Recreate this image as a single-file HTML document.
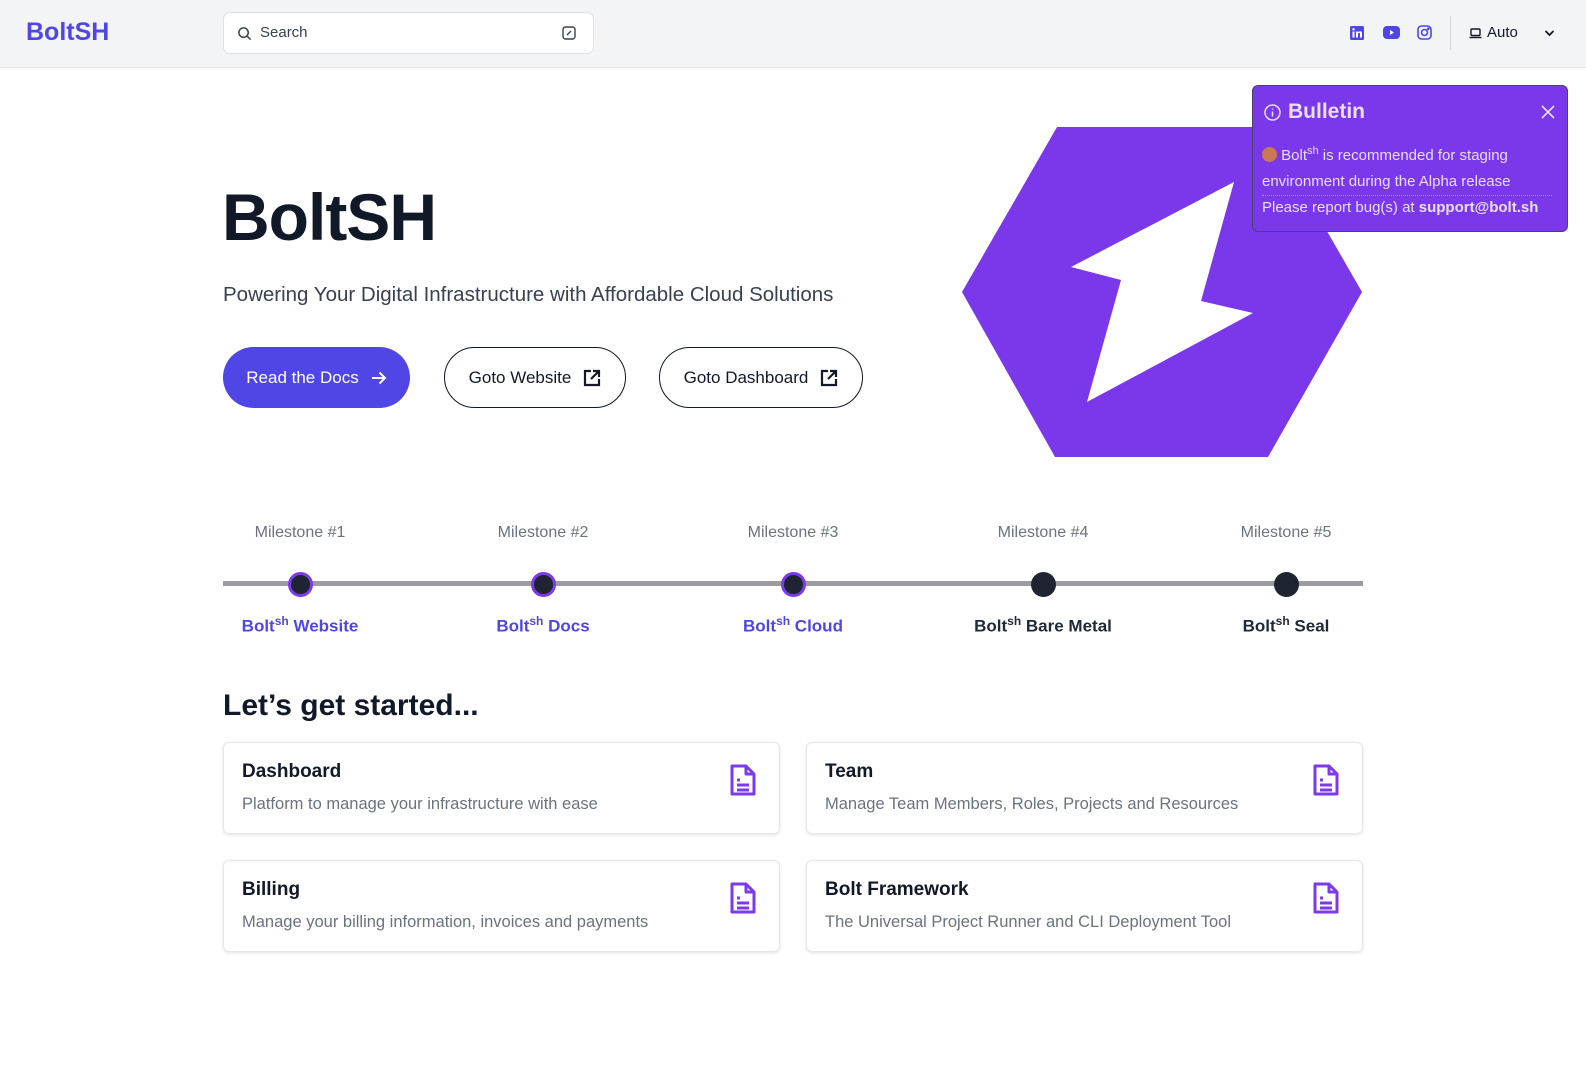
<!DOCTYPE html>
<html><head><meta charset="utf-8"><style>
*{box-sizing:border-box;margin:0;padding:0}
body{width:1586px;height:1080px;position:relative;background:#fff;font-family:"Liberation Sans",sans-serif;color:#111827;overflow:hidden}
.a{position:absolute}
.nav{left:0;top:0;width:1586px;height:68px;background:#f3f4f6;border-bottom:1px solid #e5e7eb}
.btn{position:absolute;top:347px;height:61px;border-radius:31px;display:flex;align-items:center;justify-content:center;gap:12px;font-size:17px}
.ol{border:1.5px solid #111827;color:#111827}
.ms{position:absolute;top:524px;width:200px;margin-left:-100px;text-align:center;color:#6b7280;font-size:16px}
.lb{position:absolute;top:614px;width:240px;margin-left:-120px;text-align:center;font-size:17px;font-weight:bold}
.lb sup{font-size:12px}
.dot{position:absolute;top:572px;width:25px;height:25px;margin-left:-12.5px;border-radius:50%;background:#1f2433}
.card{position:absolute;width:557px;height:92px;border:1.5px solid #e5e7eb;border-radius:6px;box-shadow:0 1px 3px rgba(0,0,0,.12)}
.card h3{position:absolute;left:18px;top:18px;font-size:19px;font-weight:bold;color:#111827}
.card p{position:absolute;left:18px;top:52px;font-size:16.5px;color:#6b7280}
.card svg{position:absolute;right:22px;top:20px}
</style></head><body>
<div class="a nav"></div>
<div class="a" style="left:26px;top:18px;font-size:25px;color:#4f46e5;font-weight:bold">BoltSH</div>
<div class="a" style="left:223px;top:12px;width:371px;height:42px;background:#fff;border:1.5px solid #e0e0e5;border-radius:7px">
<svg class="a" style="left:13px;top:13px" width="15" height="15" viewBox="0 0 16 16" fill="none" stroke="#374151" stroke-width="1.6"><circle cx="7" cy="7" r="5"/><path d="M11 11l3.5 3.5"/></svg>
<div class="a" style="left:36px;top:11px;font-size:15px;color:#374151">Search</div>
<svg class="a" style="left:338px;top:13px" width="14" height="14" viewBox="0 0 14 14" fill="none" stroke="#374151" stroke-width="1.4"><rect x="1" y="1" width="12" height="12" rx="2.5"/><path d="M5 9l4-4"/></svg>
</div>
<svg class="a" style="left:1350px;top:26px" width="14" height="14" viewBox="0 0 14 14"><rect width="14" height="14" rx="1.5" fill="#4f46e5"/><rect x="2.5" y="5.5" width="2" height="6" fill="#fff"/><circle cx="3.5" cy="3.3" r="1.2" fill="#fff"/><path d="M6 5.5h2v1c.5-.8 1.3-1.2 2.2-1.2 1.3 0 1.8.9 1.8 2.3V11.5h-2V8c0-.8-.3-1.2-.9-1.2S8 7.3 8 8v3.5H6z" fill="#fff"/></svg>
<svg class="a" style="left:1383px;top:26px" width="17" height="13" viewBox="0 0 17 13"><rect width="17" height="13" rx="4" fill="#4f46e5"/><path d="M7 4l4 2.5L7 9z" fill="#fff"/></svg>
<svg class="a" style="left:1417px;top:25px" width="15" height="15" viewBox="0 0 15 15" fill="none" stroke="#4f46e5" stroke-width="1.6"><rect x="1" y="1" width="13" height="13" rx="3.5"/><circle cx="7.5" cy="7.5" r="3"/><circle cx="11.2" cy="3.8" r=".6" fill="#4f46e5"/></svg>
<div class="a" style="left:1450px;top:16px;width:1px;height:34px;background:#d1d5db"></div>
<svg class="a" style="left:1469px;top:28px" width="13" height="11" viewBox="0 0 13 11" fill="none" stroke="#111827" stroke-width="1.4"><rect x="2" y="1" width="9" height="6.5" rx="1"/><path d="M.5 9.5h12"/></svg>
<div class="a" style="left:1487px;top:24px;font-size:15px;color:#111827">Auto</div>
<svg class="a" style="left:1544px;top:29px" width="11" height="8" viewBox="0 0 11 8" fill="none" stroke="#111827" stroke-width="1.8"><path d="M1.5 2l4 4 4-4"/></svg>

<div class="a" style="left:222px;top:179px;font-size:66px;font-weight:bold;letter-spacing:-1px;color:#111827">BoltSH</div>
<div class="a" style="left:223px;top:283px;font-size:20.5px;color:#374151">Powering Your Digital Infrastructure with Affordable Cloud Solutions</div>
<div class="btn" style="left:223px;width:187px;background:#4f46e5;color:#fff">Read the Docs <svg width="16" height="14" viewBox="0 0 16 14" fill="none" stroke="#fff" stroke-width="2"><path d="M1 7h13M8.5 1.5L14 7l-5.5 5.5"/></svg></div>
<div class="btn ol" style="left:444px;width:182px">Goto Website <svg width="18" height="18" viewBox="0 0 18 18" fill="none" stroke="#111827" stroke-width="2.2"><path d="M8 2H2v14h14v-6M10 2h6v6M16 2L8 10"/></svg></div>
<div class="btn ol" style="left:659px;width:204px">Goto Dashboard <svg width="18" height="18" viewBox="0 0 18 18" fill="none" stroke="#111827" stroke-width="2.2"><path d="M8 2H2v14h14v-6M10 2h6v6M16 2L8 10"/></svg></div>

<svg class="a" style="left:0;top:0" width="1586" height="480"><polygon points="1057,127 1267,127 1362,292 1268,457 1055,457 962,292" fill="#7a38ea"/><polygon points="1234,182 1071,267 1121,280 1087,402 1253,313 1201,301" fill="#fff"/></svg>

<div class="a" style="left:1252px;top:85px;width:316px;height:147px;background:#7a38ea;border:1.5px solid #4b3f6b;border-radius:6px;color:#e9defc">
<svg class="a" style="left:11px;top:18px" width="17" height="17" viewBox="0 0 17 17" fill="none" stroke="#e9defc" stroke-width="1.5"><circle cx="8.5" cy="8.5" r="7.5"/><path d="M8.5 7.5v5M8.5 4.5v1"/></svg>
<div class="a" style="left:35px;top:14px;font-size:21px;font-weight:bold">Bulletin</div>
<svg class="a" style="left:288px;top:19px" width="14" height="14" viewBox="0 0 14 14" stroke="#e9defc" stroke-width="1.6"><path d="M1 1l12 12M13 1L1 13"/></svg>
<div class="a" style="left:9px;top:57px;font-size:15px;line-height:26px;width:300px"><span style="display:inline-block;width:15px;height:15px;border-radius:50%;background:#c97a55;vertical-align:-2px"></span> Bolt<sup style="font-size:11px;line-height:0">sh</sup> is recommended for staging environment during the Alpha release</div>
<div class="a" style="left:9px;top:109px;width:290px;border-top:1px dotted #a89cc8"></div>
<div class="a" style="left:9px;top:113px;font-size:15px">Please report bug(s) at <b>support@bolt.sh</b></div>
</div>

<div class="ms" style="left:300px">Milestone #1</div>
<div class="ms" style="left:543px">Milestone #2</div>
<div class="ms" style="left:793px">Milestone #3</div>
<div class="ms" style="left:1043px">Milestone #4</div>
<div class="ms" style="left:1286px">Milestone #5</div>
<div class="a" style="left:223px;top:581px;width:1140px;height:5px;background:#9b9ba0"></div>
<div class="dot" style="left:300px;border:3px solid #7c3aed"></div>
<div class="dot" style="left:543px;border:3px solid #7c3aed"></div>
<div class="dot" style="left:793px;border:3px solid #7c3aed"></div>
<div class="dot" style="left:1043px"></div>
<div class="dot" style="left:1286px"></div>
<div class="lb" style="left:300px;color:#4f46e5">Bolt<sup>sh</sup> Website</div>
<div class="lb" style="left:543px;color:#4f46e5">Bolt<sup>sh</sup> Docs</div>
<div class="lb" style="left:793px;color:#4f46e5">Bolt<sup>sh</sup> Cloud</div>
<div class="lb" style="left:1043px;color:#1f2937">Bolt<sup>sh</sup> Bare Metal</div>
<div class="lb" style="left:1286px;color:#1f2937">Bolt<sup>sh</sup> Seal</div>

<div class="a" style="left:223px;top:689px;font-size:30px;font-weight:bold;color:#111827">Let’s get started...</div>

<div class="card" style="left:223px;top:742px"><h3>Dashboard</h3><p>Platform to manage your infrastructure with ease</p><svg width="28" height="34" viewBox="0 0 28 34" fill="none" stroke="#7c3aed" stroke-width="3" stroke-linejoin="round"><path d="M3 3h14l8 8v20H3z"/><path d="M17 3v8h8M8 17h3M8 22h12M8 27h12"/></svg></div>
<div class="card" style="left:806px;top:742px"><h3>Team</h3><p>Manage Team Members, Roles, Projects and Resources</p><svg width="28" height="34" viewBox="0 0 28 34" fill="none" stroke="#7c3aed" stroke-width="3" stroke-linejoin="round"><path d="M3 3h14l8 8v20H3z"/><path d="M17 3v8h8M8 17h3M8 22h12M8 27h12"/></svg></div>
<div class="card" style="left:223px;top:860px"><h3>Billing</h3><p>Manage your billing information, invoices and payments</p><svg width="28" height="34" viewBox="0 0 28 34" fill="none" stroke="#7c3aed" stroke-width="3" stroke-linejoin="round"><path d="M3 3h14l8 8v20H3z"/><path d="M17 3v8h8M8 17h3M8 22h12M8 27h12"/></svg></div>
<div class="card" style="left:806px;top:860px"><h3>Bolt Framework</h3><p>The Universal Project Runner and CLI Deployment Tool</p><svg width="28" height="34" viewBox="0 0 28 34" fill="none" stroke="#7c3aed" stroke-width="3" stroke-linejoin="round"><path d="M3 3h14l8 8v20H3z"/><path d="M17 3v8h8M8 17h3M8 22h12M8 27h12"/></svg></div>
</body></html>
